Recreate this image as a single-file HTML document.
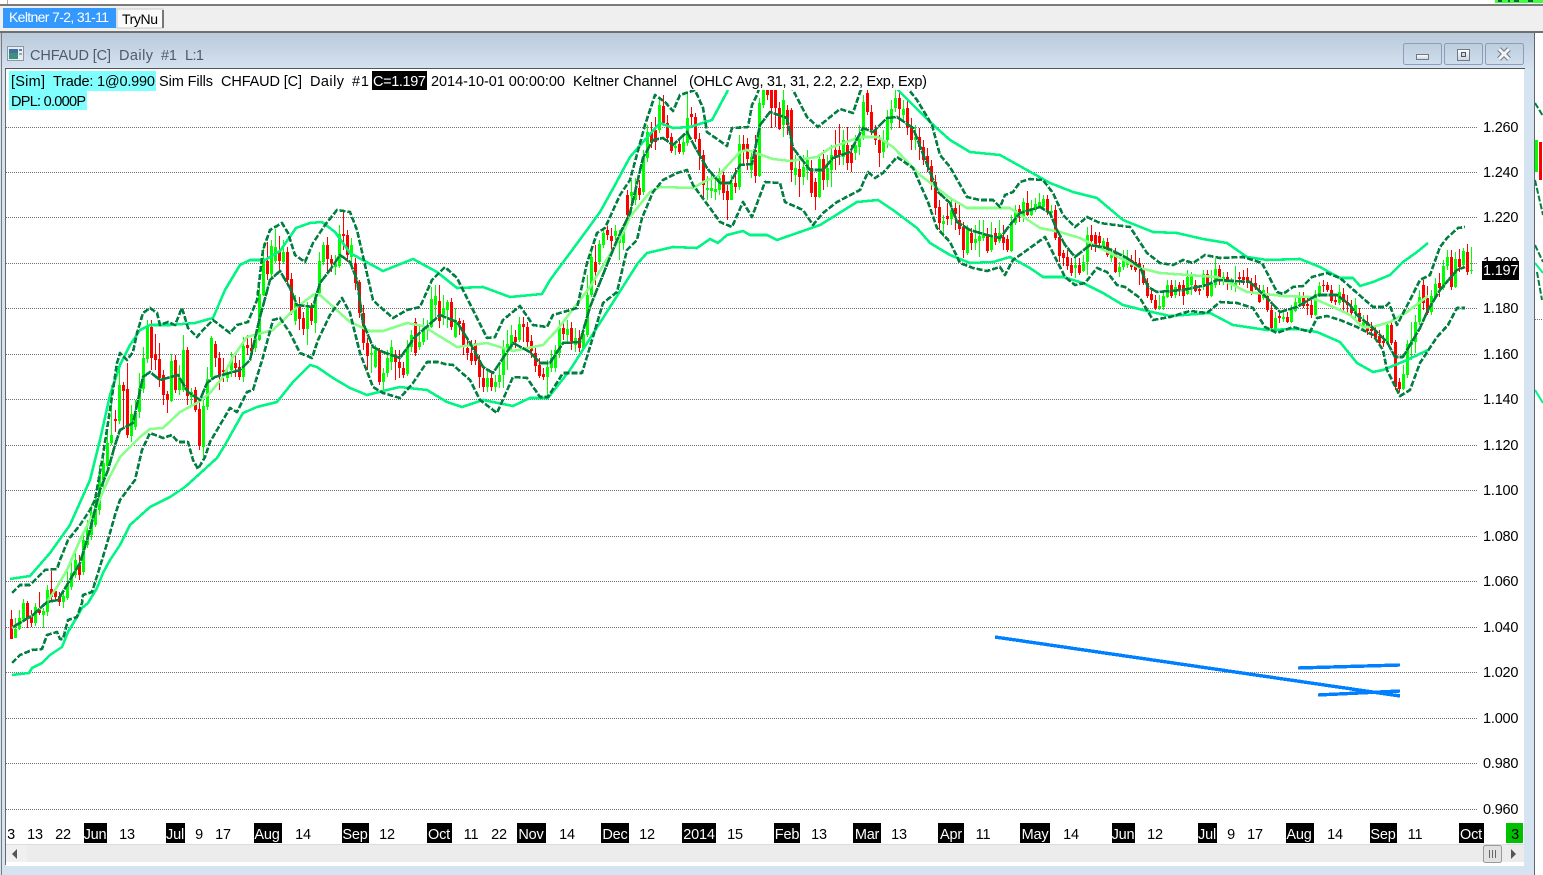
<!DOCTYPE html>
<html><head><meta charset="utf-8"><title>CHFAUD</title>
<style>
html,body{margin:0;padding:0;background:#fff;width:1543px;height:875px;overflow:hidden}
svg{display:block;font-family:"Liberation Sans",sans-serif;font-size:14.5px}
text{white-space:pre}
.ax text{text-anchor:middle}
.ax,.yl{letter-spacing:-.2px}
</style></head><body>
<svg width="1543" height="875" viewBox="0 0 1543 875" xmlns="http://www.w3.org/2000/svg">
<defs>
<linearGradient id="tg" x1="0" y1="0" x2="0" y2="1"><stop offset="0" stop-color="#b9cadb"/><stop offset="1" stop-color="#d5e2f0"/></linearGradient>
<linearGradient id="bg" x1="0" y1="0" x2="0" y2="1"><stop offset="0" stop-color="#bccddd"/><stop offset="1" stop-color="#d0deec"/></linearGradient>
<linearGradient id="gl" x1="0" y1="0" x2="0" y2="1"><stop offset="0" stop-color="#fff"/><stop offset="1" stop-color="#cfd3da"/></linearGradient>
<clipPath id="cc"><rect x="6" y="90" width="1474" height="733"/></clipPath>
<clipPath id="rc"><rect x="1535" y="70" width="8" height="805"/></clipPath>
</defs>
<rect width="1543" height="875" fill="#fff"/>
<!-- top strip -->
<rect x="7" y="0" width="1" height="4" fill="#aaa"/>
<rect x="1495" y="0" width="48" height="3" fill="#40ff40"/>
<rect x="1498" y="0" width="4" height="2" fill="#063"/><rect x="1508" y="0" width="2" height="2" fill="#063"/><rect x="1514" y="0" width="5" height="2" fill="#063"/><rect x="1528" y="0" width="5" height="2" fill="#063"/>
<rect x="0" y="4" width="1543" height="2" fill="#7a7a7a"/>
<rect x="0" y="6" width="1543" height="25" fill="#efefef"/>
<rect x="3" y="8" width="113" height="20" fill="#3399ff"/>
<text x="9" y="22" fill="#fff" font-size="14" textLength="100">Keltner 7-2, 31-11</text>
<rect x="117" y="9" width="46" height="19" fill="#fafafa" stroke="#c8c8c8" stroke-width="1"/>
<rect x="162" y="10" width="2" height="18" fill="#777"/>
<text x="122" y="24" fill="#000" font-size="14" textLength="36">TryNu</text>
<rect x="0" y="31" width="1543" height="2" fill="#6f6f6f"/>
<!-- window frame -->
<rect x="0" y="33" width="1534" height="842" fill="#d6e3f1"/>
<rect x="0" y="33" width="1534" height="36" fill="url(#tg)"/>
<rect x="1" y="33" width="1" height="842" fill="#7a7a7a"/>
<rect x="1534" y="33" width="1" height="842" fill="#5f6670"/>
<rect x="5" y="68" width="1520" height="1" fill="#555"/>
<rect x="5" y="69" width="1" height="796" fill="#6a6a6a"/>
<rect x="6" y="69" width="1518" height="797" fill="#fff"/>
<rect x="1535" y="33" width="8" height="842" fill="#fff"/>
<!-- title -->
<rect x="7.5" y="46.5" width="16" height="14" fill="#e8edf2" stroke="#8b97a3" stroke-width="1"/>
<rect x="9" y="49" width="9" height="10" fill="#3f8f80"/>
<rect x="9" y="49" width="9" height="4" fill="#3f6f9f"/>
<rect x="19" y="49" width="3" height="2" fill="#6a7f90"/><rect x="19" y="53" width="3" height="2" fill="#9aa7b3"/>
<g fill="#4f5b68"><text x="30" y="60" textLength="81">CHFAUD [C]</text><text x="119" y="60" textLength="34">Daily</text><text x="161" y="60" textLength="16">#1</text><text x="185" y="60" textLength="19">L:1</text></g>
<g fill="url(#bg)" stroke="#8d9cbb"><rect x="1403.5" y="43.5" width="38" height="21" rx="2"/><rect x="1444.5" y="43.5" width="38" height="21" rx="2"/><rect x="1485.5" y="43.5" width="38" height="21" rx="2"/></g>
<rect x="1416.5" y="54.5" width="12" height="5" fill="url(#gl)" stroke="#6d7a8c"/>
<rect x="1457.5" y="49.5" width="12" height="11" fill="url(#gl)" stroke="#6d7a8c"/><rect x="1461.5" y="52.5" width="4" height="4" fill="#cfd8e4" stroke="#4a5568"/>
<path d="M1499 49L1509 59M1509 49L1499 59" stroke="#6d7a8c" stroke-width="5"/><path d="M1499 49L1509 59M1509 49L1499 59" stroke="#f4f4f6" stroke-width="3"/>
<!-- grid -->
<g stroke="#707070" stroke-width="1" stroke-dasharray="1 1" fill="none"><path d="M6 127.5H1478M6 172.5H1478M6 217.5H1478M6 263.5H1478M6 308.5H1478M6 354.5H1478M6 399.5H1478M6 445.5H1478M6 490.5H1478M6 536.5H1478M6 581.5H1478M6 627.5H1478M6 672.5H1478M6 718.5H1478M6 763.5H1478M6 809.5H1478"/></g>
<!-- candles -->
<g clip-path="url(#cc)"><g transform="translate(.5 0)" fill="none" shape-rendering="crispEdges">
<path stroke="#00ff00" d="M15 618V638M19 610V630M23 599V622M35 603V626M43 608V628M47 585V616M63 590V608M67 570V600M71 560V590M75 550V578M83 535V575M87 520V548M91 505V540M95 495V527M99 465V515M103 455V490M107 429V470M111 385V445M119 363V424M131 405V442M135 400V430M139 373V418M143 347V393M147 320V363M171 354V402M179 365V395M183 335V392M191 388V405M203 400V457M207 367V410M211 336V380M227 365V382M231 352V377M243 337V382M255 332V352M259 285V341M263 243V296M271 240V278M275 229V263M283 240V264M295 295V325M307 302V345M315 293V333M319 252V295M323 242V265M335 255V275M339 225V268M351 238V265M371 347V373M375 345V368M383 368V390M387 350V377M391 340V370M407 340V376M411 330V352M419 325V350M423 318V345M427 320V340M431 287V328M435 285V320M443 295V325M447 300V328M455 308V338M487 370V392M495 375V392M499 365V388M503 340V388M507 330V370M511 325V352M519 317V342M547 360V396M551 350V372M555 345V372M559 320V358M567 320V342M575 328V352M583 325V350M587 275V337M591 248V297M599 240V265M603 228V248M615 225V240M619 230V260M623 225V250M631 180V215M635 178V205M643 150V195M647 125V162M659 98V133M675 141V155M683 136V155M687 94V146M707 176V200M711 175V198M715 178V200M719 168V195M731 175V200M739 135V190M751 150V178M759 98V177M763 90V108M783 90V137M795 155V185M803 155V185M807 150V180M819 155V198M827 155V187M831 145V187M843 130V165M855 135V160M859 125V155M863 95V140M883 130V158M887 110V148M891 100V130M895 90V112M903 100V120M915 125V150M943 215V237M951 200V225M967 225V255M975 225V250M979 220V257M983 220V241M991 222V252M999 220V243M1011 215V252M1015 205V225M1023 198V222M1031 200V216M1035 198V212M1039 193V208M1043 195V210M1051 205V216M1075 258V278M1083 255V272M1087 227V275M1103 238V250M1111 248V262M1119 262V277M1123 250V270M1127 250V268M1159 295V310M1163 290V310M1167 280V298M1175 280V298M1187 270V295M1191 272V295M1203 270V290M1211 270V297M1215 259V288M1223 272V285M1231 278V290M1235 266V292M1263 285V300M1275 312V332M1283 312V322M1291 305V323M1295 298V312M1299 292V305M1315 290V316M1319 282V297M1339 285V305M1355 298V318M1363 315V332M1387 322V345M1403 365V390M1407 340V378M1411 322V360M1415 315V353M1419 290V325M1431 290V315M1435 278V300M1443 260V290M1447 250V270M1455 252V288M1463 248V268M1471 247V274"/>
<path stroke="#00ff00" stroke-width="3" d="M15 629V638M19 618V629M23 603V619M35 607V623M43 611V615M47 590V612M63 596V602M67 585V598M71 573V587M75 560V575M83 540V572M87 530V545M91 512V535M95 505V525M99 475V510M103 463V480M107 443V466M111 435V443M119 385V421M131 414V436M135 413V427M139 388V412M143 358V389M147 327V359M171 361V401M179 378V390M183 350V390M191 392V397M203 406V447M207 379V407M211 338V377M227 372V378M231 360V370M243 346V377M255 339V348M259 294V340M263 260V295M271 246V274M275 247V261M283 252V262M295 303V321M307 308V329M315 297V323M319 261V293M323 245V262M335 263V267M339 234V266M351 245V257M371 353V355M375 350V367M383 373V382M387 358V373M391 347V362M407 347V374M411 335V347M419 342V347M423 328V342M427 326V330M431 299V327M435 296V305M443 308V315M447 302V310M455 320V337M487 378V387M495 382V387M499 375V382M503 347V375M507 344V348M511 335V347M519 324V340M547 367V377M551 358V368M555 350V368M559 328V353M567 329V335M575 338V345M583 334V348M587 295V335M591 257V295M599 244V262M603 233V245M615 231V236M619 236V243M623 230V243M631 192V196M635 190V200M643 158V192M647 132V158M659 105V130M675 146V148M683 142V152M687 118V143M707 188V190M711 188V191M715 189V192M719 178V190M731 183V200M739 144V187M751 157V170M759 103V176M763 90V105M783 100V125M795 168V175M803 167V177M807 160V170M819 159V197M827 168V180M831 155V170M843 140V157M855 145V153M859 138V147M863 102V137M883 140V152M887 118V140M891 109V123M895 98V108M903 109V115M915 137V140M943 221V224M951 210V219M967 229V253M975 239V243M979 236V241M983 234V238M991 235V250M999 233V241M1011 222V251M1015 210V223M1023 202V217M1031 208V215M1035 204V210M1039 202V206M1043 199V207M1051 211V213M1075 265V268M1083 262V271M1087 235V262M1103 241V247M1111 253V258M1119 267V272M1123 258V267M1127 258V265M1159 306V308M1163 296V307M1167 285V297M1175 287V295M1187 277V294M1191 276V285M1203 274V285M1211 283V296M1215 269V285M1223 277V281M1231 281V285M1235 283V286M1263 290V298M1275 318V329M1283 317V319M1291 310V322M1295 302V311M1299 297V303M1315 294V315M1319 286V295M1339 292V303M1355 305V313M1363 322V327M1387 325V343M1403 374V389M1407 344V375M1411 340V345M1415 322V342M1419 297V322M1431 296V312M1435 284V297M1443 266V288M1447 257V266M1455 259V287M1463 251V265M1471 270V271"/>
<path stroke="#ff0000" d="M11 610V639M27 601V628M31 610V627M39 592V615M51 571V600M55 588V600M59 592V606M79 555V580M115 410V432M123 382V428M127 363V438M151 320V370M155 334V370M159 343V387M163 370V405M167 391V413M175 355V393M187 347V405M195 387V412M199 400V450M215 341V367M219 352V390M223 358V382M235 355V377M239 360V380M247 335V355M251 338V358M267 242V280M279 236V270M287 247V284M291 273V315M299 297V330M303 312V335M311 303V325M327 237V273M331 255V272M343 210V250M347 230V262M355 258V290M359 280V318M363 305V350M367 338V370M379 348V385M395 350V380M399 350V378M403 362V378M415 318V356M439 285V328M451 298V330M459 318V335M463 320V355M467 338V360M471 340V365M475 340V365M479 355V388M483 368V392M491 372V391M515 330V348M523 317V342M527 322V350M531 335V358M535 345V372M539 358V378M543 368V380M563 322V340M571 322V350M579 330V352M595 245V285M607 226V240M611 228V250M627 190V225M639 180V200M651 122V148M655 117V150M663 95V126M667 115V142M671 133V153M679 140V154M691 107V127M695 113V142M699 133V170M703 150V198M723 170V200M727 185V220M735 168V193M743 135V165M747 138V170M755 135V183M767 90V100M771 90V128M775 90V127M779 102V130M787 105V135M791 108V182M799 160V197M811 160V197M815 178V210M823 150V190M835 130V170M839 124V165M847 127V170M851 145V172M867 90V115M871 105V135M875 125V145M879 135V167M899 90V128M907 100V135M911 118V150M919 128V160M923 140V165M927 148V172M931 160V190M935 175V215M939 200V230M947 203V225M955 200V230M959 205V235M963 222V258M971 228V250M987 228V253M995 228V245M1003 225V250M1007 235V252M1019 205V222M1027 191V216M1047 195V215M1055 205V240M1059 232V262M1063 250V266M1067 250V270M1071 258V276M1079 258V275M1091 225V250M1095 232V252M1099 232V248M1107 238V257M1115 248V273M1131 255V270M1135 250V272M1139 258V285M1143 265V285M1147 278V298M1151 290V303M1155 295V310M1171 280V298M1179 282V296M1183 280V305M1195 280V292M1199 285V295M1207 270V298M1219 265V285M1227 272V290M1239 272V285M1243 270V285M1247 268V288M1251 278V295M1255 275V290M1259 285V303M1267 287V312M1271 305V330M1279 310V323M1287 312V323M1303 292V308M1307 298V315M1311 300V318M1323 280V292M1327 282V292M1331 285V303M1335 295V305M1343 288V312M1347 295V315M1351 300V318M1359 308V326M1367 315V335M1371 322V338M1375 325V340M1379 330V346M1383 335V347M1391 321V345M1395 340V390M1399 378V392M1423 280V310M1427 286V315M1439 273V297M1451 250V290M1459 249V272M1467 244V275"/>
<path stroke="#ff0000" stroke-width="3" d="M11 619V639M27 603V619M31 615V623M39 608V613M51 589V597M55 591V597M59 596V602M79 565V575M115 419V421M123 385V391M127 389V435M151 327V358M155 354V360M159 359V378M163 375V395M167 394V400M175 360V390M187 350V396M195 390V410M199 409V446M215 344V358M219 358V376M223 370V372M235 363V368M239 367V377M247 345V348M251 348V351M267 261V274M279 252V261M287 252V280M291 279V313M299 307V319M303 318V329M311 307V321M327 245V259M331 259V263M343 234V236M347 235V255M355 263V283M359 282V313M363 313V343M367 343V356M379 350V382M395 355V362M399 362V368M403 368V375M415 322V353M439 301V321M451 302V327M459 321V324M463 323V346M467 348V353M471 353V361M475 343V361M479 360V377M483 378V387M491 378V387M515 337V342M523 324V327M527 327V342M531 341V351M535 353V366M539 365V376M543 374V377M563 328V334M571 328V341M579 338V348M595 262V272M607 230V235M611 236V241M627 195V215M639 188V195M651 132V142M655 130V142M663 106V123M667 123V138M671 137V151M679 144V152M691 114V117M695 117V139M699 139V155M703 155V185M723 175V193M727 191V200M735 183V187M743 144V150M747 144V159M755 150V176M767 90V95M771 90V108M775 90V108M779 108V129M787 110V125M791 110V170M799 169V177M811 168V193M815 182V197M823 159V180M835 150V156M839 150V155M847 145V163M851 153V163M867 93V112M871 112V130M875 130V140M879 140V153M899 98V109M907 108V128M911 128V140M919 137V147M923 147V160M927 156V167M931 166V182M935 182V208M939 207V223M947 216V219M955 208V214M959 220V229M963 227V250M971 233V243M987 235V251M995 233V242M1003 237V243M1007 239V250M1019 209V213M1027 203V215M1047 199V212M1055 210V238M1059 237V256M1063 253V258M1067 257V266M1071 265V273M1079 265V273M1091 235V241M1095 235V245M1099 236V243M1107 242V255M1115 252V272M1131 260V267M1135 262V270M1139 263V267M1143 270V283M1147 283V296M1151 294V300M1155 300V308M1171 285V296M1179 285V290M1183 285V296M1195 285V291M1199 289V291M1207 274V296M1219 269V278M1227 277V281M1239 277V279M1243 277V280M1247 277V283M1251 283V292M1255 283V287M1259 290V302M1267 296V310M1271 310V328M1279 316V318M1287 317V322M1303 297V306M1307 304V306M1311 305V315M1323 285V286M1327 285V290M1331 290V301M1335 300V302M1343 294V302M1347 302V305M1351 307V313M1359 313V322M1367 322V331M1371 329V331M1375 330V338M1379 336V343M1383 341V343M1391 325V343M1395 342V387M1399 382V389M1423 285V303M1427 298V313M1439 283V288M1451 257V287M1459 259V267M1467 252V272"/>
</g>
<!-- bands -->
<g fill="none" stroke-linejoin="round" stroke-width="2.6" shape-rendering="crispEdges">
<polyline stroke="#00f582" points="10,579 30,576 50,553 70,525 90,480 100,440 110,395 120,365 130,345 140,330 150,325 170,325 195,323 213,318 225,290 240,265 250,260 265,260 280,251 296,228 310,223 322,222 335,232 350,253 383,271 413,259 437,272 457,288 483,287 510,297 542,294 550,280 587,230 600,212 615,185 630,157 643,142 660,123 673,128 690,127 712,120 727,92 732,80"/>
<polyline stroke="#00f582" points="893,85 898,90 930,122 950,140 970,152 1000,155 1027,170 1050,183 1073,192 1097,198 1123,220 1153,232 1177,233 1203,239 1227,243 1247,257 1267,260 1300,259 1320,267 1340,278 1353,278 1360,286 1373,282 1390,275 1403,262 1417,252 1428,243"/>
<polyline stroke="#00f582" points="12,675 29,673 32,668 42,663 50,655 62,647 68,632 77,617 82,608 88,603 97,588 103,573 110,560 120,545 130,525 140,516 150,507 170,497 185,487 195,478 217,458 225,445 235,427 243,413 257,407 277,402 293,382 310,365 317,367 333,378 350,388 367,395 387,390 400,387 427,390 447,402 462,407 483,400 513,406 530,398 548,398 570,370 610,307 638,263 647,253 660,250 673,247 697,248 710,239 718,243 727,235 743,231 750,235 767,235 777,240 800,232 820,225 833,217 857,202 878,200 893,210 917,228 930,243 950,255 970,263 993,262 1010,257 1030,268 1043,277 1063,277 1083,283 1103,293 1123,305 1143,310 1170,316 1210,313 1233,325 1267,330 1297,329 1317,332 1340,342 1357,363 1373,372 1383,370 1407,360 1428,350"/>
<polyline stroke="#88ff88" points="12,628 33,615 47,602 57,587 67,570 80,540 95,510 108,480 120,457 140,437 150,429 163,428 180,412 197,403 210,393 223,377 233,357 247,337 273,330 297,307 313,295 320,295 350,322 370,331 383,331 407,323 423,326 457,347 487,343 513,351 543,345 557,330 590,287 623,233 630,217 650,192 660,187 693,188 707,180 717,177 740,152 747,150 773,159 790,161 817,157 830,148 860,137 878,137 893,147 920,175 950,198 967,208 1010,208 1040,228 1060,232 1080,238 1110,253 1140,268 1160,273 1217,277 1247,292 1283,296 1310,297 1340,310 1350,315 1363,327 1373,327 1390,322 1407,312 1428,296"/>
<polyline stroke="#007f40" stroke-dasharray="10 1" points="13,627 33,615 47,602 58,600 67,585 80,563 90,530 100,490 108,470 115,445 120,430 133,423 143,377 150,372 160,380 178,375 188,392 200,400 207,383 215,377 240,370 250,360 260,317 270,280 280,271 290,288 297,305 313,307 320,283 330,270 340,255 350,262 357,280 363,323 373,347 383,352 400,358 415,337 440,315 457,322 470,343 483,367 493,373 505,355 513,343 530,352 540,363 550,363 563,343 580,342 590,307 617,240 630,213 643,158 653,140 663,138 673,145 687,132 695,147 707,168 720,183 730,183 740,165 752,164 760,125 770,112 787,118 793,148 810,170 823,170 833,158 850,152 863,128 873,132 887,118 897,117 913,128 930,172 938,192 950,203 957,222 970,230 987,235 1000,238 1010,225 1020,213 1040,207 1050,213 1057,230 1065,245 1075,257 1090,245 1107,248 1127,258 1140,267 1148,287 1157,292 1183,290 1207,285 1217,280 1250,282 1267,298 1280,312 1297,307 1317,295 1337,295 1350,305 1357,315 1373,328 1387,342 1395,357 1403,357 1420,328 1428,310 1440,290 1457,270 1465,267"/>
<g stroke="#007f40" stroke-dasharray="6 2">
<polyline points="12,593 20,585 30,585 42,573 45,570 57,569 60,560 68,540 80,525 90,510 95,500 103,455 110,410 117,363 120,353 127,360 133,352 137,333 143,313 150,308 157,313 160,325 168,322 175,325 182,308 188,328 197,337 203,330 213,320 230,333 237,325 248,322 257,300 263,250 270,230 282,223 288,233 295,255 305,262 313,243 325,225 337,210 350,212 357,230 373,300 378,305 393,318 407,310 420,307 432,280 445,267 457,278 473,310 487,338 495,337 503,320 520,306 533,325 547,327 553,315 577,308 587,263 597,233 605,228 620,195 630,180 645,125 655,95 665,102 673,111 680,95 695,90 703,108 707,132 727,146 732,128 748,127 752,105 757,95 760,85"/>
<polyline points="790,85 793,90 807,117 818,127 840,109 853,113 860,92 864,85"/>
<polyline points="905,85 917,100 932,125 940,155 950,167 967,197 980,200 993,200 1000,207 1005,195 1013,192 1020,182 1030,179 1043,180 1053,193 1063,215 1075,227 1087,217 1100,223 1130,227 1147,253 1160,263 1173,265 1183,260 1193,263 1205,255 1220,258 1243,257 1262,263 1277,292 1283,294 1293,287 1303,286 1312,277 1327,273 1340,278 1373,307 1385,307 1389,303 1397,325 1410,300 1420,280 1430,275 1440,247 1447,238 1458,228 1465,227"/>
<polyline points="12,663 20,655 32,650 42,649 47,635 57,632 60,639 63,639 68,620 77,617 82,603 83,595 92,592 98,573 102,560 108,540 115,515 120,500 135,480 142,450 150,433 163,438 172,435 178,442 188,442 193,460 198,469 205,457 210,442 230,408 237,412 247,392 253,390 263,357 273,320 280,318 290,333 300,353 312,358 318,340 330,315 342,298 350,313 360,353 373,387 383,393 400,398 413,383 427,362 438,362 445,364 453,365 470,380 480,400 497,413 513,377 527,378 540,397 548,397 563,373 582,373 590,347 603,303 617,292 627,250 637,240 642,218 653,192 663,180 677,173 687,170 693,185 710,208 720,222 732,227 743,202 752,217 765,182 780,183 785,202 803,210 813,225 823,213 837,202 860,190 868,172 875,178 883,173 897,157 913,168 928,202 937,228 950,242 960,263 973,268 987,271 1000,267 1005,275 1013,260 1030,248 1045,237 1053,253 1065,277 1075,285 1085,283 1097,268 1107,272 1117,285 1125,287 1140,298 1153,320 1170,317 1190,311 1207,313 1220,302 1237,303 1253,308 1265,327 1277,333 1293,327 1310,332 1317,318 1327,316 1340,320 1357,327 1373,335 1383,350 1387,370 1400,396 1410,390 1420,363 1437,337 1448,325 1457,308 1465,308"/>
</g></g></g>
<!-- drawn lines -->
<g stroke="#0080ff" stroke-width="3.4" fill="none" shape-rendering="crispEdges"><path d="M995 637L1400 696M1298 668L1400 665M1318 695L1400 691"/></g>
<!-- header -->
<rect x="9" y="71" width="147" height="20" fill="#80ffff"/>
<rect x="9" y="91" width="78" height="19" fill="#80ffff"/>
<rect x="372" y="71" width="55" height="19" fill="#000"/>
<g fill="#000"><text x="11" y="86" textLength="34">[Sim]</text><text x="53" y="86" textLength="102">Trade: 1@0.990</text>
<text x="159" y="86" textLength="54">Sim Fills</text><text x="221" y="86" textLength="81">CHFAUD [C]</text><text x="310" y="86" textLength="34">Daily</text><text x="352" y="86" textLength="17">#1</text>
<text x="431" y="86" textLength="134">2014-10-01 00:00:00</text><text x="573" y="86" textLength="104">Keltner Channel</text><text x="689" y="86" textLength="238">(OHLC Avg, 31, 31, 2.2, 2.2, Exp, Exp)</text>
<text x="11" y="106" textLength="75">DPL: 0.000P</text></g>
<text x="373" y="86" fill="#fff" textLength="53">C=1.197</text>
<!-- y axis -->
<g class="yl" fill="#000"><text x="1483" y="132">1.260</text><text x="1483" y="177">1.240</text><text x="1483" y="222">1.220</text><text x="1483" y="267">1.200</text><text x="1483" y="313">1.180</text><text x="1483" y="359">1.160</text><text x="1483" y="404">1.140</text><text x="1483" y="450">1.120</text><text x="1483" y="495">1.100</text><text x="1483" y="541">1.080</text><text x="1483" y="586">1.060</text><text x="1483" y="632">1.040</text><text x="1483" y="677">1.020</text><text x="1483" y="723">1.000</text><text x="1483" y="768">0.980</text><text x="1483" y="814">0.960</text></g>
<rect x="1482" y="261" width="37" height="19" fill="#000"/>
<text class="yl" x="1483" y="275" fill="#fff">1.197</text>
<!-- x axis -->
<g fill="#000"><rect x="84" y="823" width="23" height="20"/><rect x="166" y="823" width="19" height="20"/><rect x="254" y="823" width="28" height="20"/><rect x="342" y="823" width="27" height="20"/><rect x="427" y="823" width="25" height="20"/><rect x="517" y="823" width="29" height="20"/><rect x="601" y="823" width="28" height="20"/><rect x="682" y="823" width="34" height="20"/><rect x="774" y="823" width="26" height="20"/><rect x="853" y="823" width="28" height="20"/><rect x="938" y="823" width="26" height="20"/><rect x="1020" y="823" width="30" height="20"/><rect x="1112" y="823" width="23" height="20"/><rect x="1198" y="823" width="19" height="20"/><rect x="1286" y="823" width="28" height="20"/><rect x="1370" y="823" width="27" height="20"/><rect x="1459" y="823" width="25" height="20"/></g>
<rect x="1506" y="823" width="17" height="20" fill="#00c000"/>
<g class="ax" fill="#000"><text x="11" y="839">3</text><text x="35" y="839">13</text><text x="63" y="839">22</text><text x="127" y="839">13</text><text x="199" y="839">9</text><text x="223" y="839">17</text><text x="303" y="839">14</text><text x="387" y="839">12</text><text x="471" y="839">11</text><text x="499" y="839">22</text><text x="567" y="839">14</text><text x="647" y="839">12</text><text x="735" y="839">15</text><text x="819" y="839">13</text><text x="899" y="839">13</text><text x="983" y="839">11</text><text x="1071" y="839">14</text><text x="1155" y="839">12</text><text x="1231" y="839">9</text><text x="1255" y="839">17</text><text x="1335" y="839">14</text><text x="1415" y="839">11</text><text x="1515" y="839">3</text></g>
<g class="ax" fill="#fff"><text x="95" y="839">Jun</text><text x="175" y="839">Jul</text><text x="267" y="839">Aug</text><text x="355" y="839">Sep</text><text x="439" y="839">Oct</text><text x="531" y="839">Nov</text><text x="615" y="839">Dec</text><text x="699" y="839">2014</text><text x="787" y="839">Feb</text><text x="867" y="839">Mar</text><text x="951" y="839">Apr</text><text x="1035" y="839">May</text><text x="1123" y="839">Jun</text><text x="1207" y="839">Jul</text><text x="1299" y="839">Aug</text><text x="1383" y="839">Sep</text><text x="1471" y="839">Oct</text></g>
<!-- scrollbar -->
<rect x="6" y="845" width="1518" height="17" fill="#ececec"/>
<rect x="6" y="844" width="1518" height="1" fill="#dcdcdc"/>
<rect x="6" y="845" width="21" height="17" fill="#f0f0f0"/>
<path d="M12 854L17 849V859Z" fill="#555"/>
<path d="M1511 849L1516 854L1511 859Z" fill="#555"/>
<rect x="1483.5" y="845.5" width="18" height="17" rx="2" fill="#e2e2e2" stroke="#9a9a9a"/>
<path d="M1489.5 850V858M1492.5 850V858M1495.5 850V858" stroke="#666" stroke-width="1"/>
<!-- neighbouring window fragment -->
<g clip-path="url(#rc)" fill="none" stroke-width="2">
<path stroke="#007f40" stroke-dasharray="6 2" d="M1535 103L1543 116M1535 180L1543 215M1537 272L1542 300M1535 245L1543 262"/>
<path stroke="#00f582" d="M1535 263L1543 273M1535 390L1543 403"/>
<path d="M1536.5 140V172" stroke="#00ff00" stroke-width="3"/><path d="M1540.5 142V180" stroke="#ff0000" stroke-width="3"/>
<path d="M1535 319.5H1543" stroke="#707070" stroke-width="1" stroke-dasharray="1 1"/>
</g>
</svg>
</body></html>
